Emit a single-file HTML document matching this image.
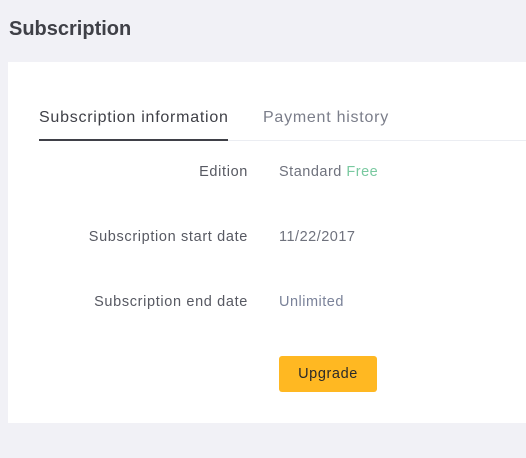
<!DOCTYPE html>
<html><head><style>
body{margin:0;width:526px;height:458px;background:#f1f1f6;font-family:"Liberation Sans",sans-serif;position:relative;overflow:hidden}
.t{position:absolute;left:9px;top:18px;font-size:20px;color:#3f4047;font-weight:bold}
.card{position:absolute;left:8px;top:62px;width:518px;height:361px;background:#fff}
.tab{position:absolute;top:109px;font-size:16px;letter-spacing:0.75px;white-space:nowrap}
.line{position:absolute;top:140px;height:1px;background:#ebedf2;left:228px;width:298px}
.ul{position:absolute;top:139px;height:2px;background:#3f4047;left:39px;width:189px}
.l{position:absolute;right:278px;font-size:14.5px;letter-spacing:0.65px;color:#575962;white-space:nowrap}
.v{position:absolute;left:279px;font-size:14.5px;letter-spacing:0.5px;color:#6f727d;white-space:nowrap}
.btn{position:absolute;left:279px;top:356px;width:98px;height:36px;background:#ffb822;border-radius:3px;color:#2a2a2a;font-size:14.5px;letter-spacing:0.6px;text-align:center;line-height:37px}
</style></head><body>
<div class="t">Subscription</div>
<div class="card"></div>
<div class="tab" style="left:39px;color:#3f4047">Subscription information</div>
<div class="tab" style="left:263px;color:#7b7e8a">Payment history</div>
<div class="line"></div><div class="ul"></div>
<div class="l" style="top:164px">Edition</div>
<div class="v" style="top:164px">Standard <span style="color:#79c9a0">Free</span></div>
<div class="l" style="top:229px">Subscription start date</div>
<div class="v" style="top:229px">11/22/2017</div>
<div class="l" style="top:294px">Subscription end date</div>
<div class="v" style="top:294px;color:#7a8299">Unlimited</div>
<div class="btn">Upgrade</div>
</body></html>
